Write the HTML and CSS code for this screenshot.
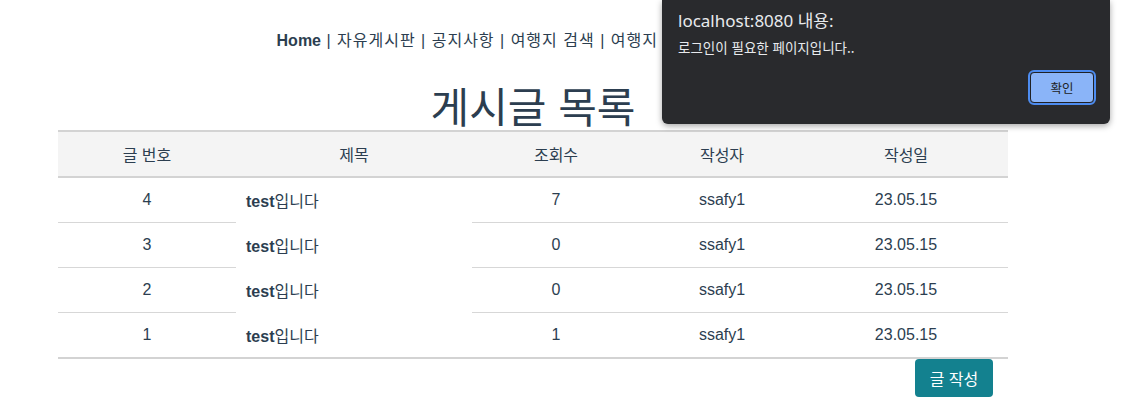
FILE: index.html
```html
<!DOCTYPE html>
<html lang="ko">
<head>
<meta charset="utf-8">
<title>게시글 목록</title>
<link rel="stylesheet" href="styles.css">
</head>
<body>
<div class="app">
  <nav class="nav">
    <a class="nav-link active" href="#">Home</a> | <a class="nav-link" href="#">자유게시판</a> | <a class="nav-link" href="#">공지사항</a> | <a class="nav-link" href="#">여행지 검색</a> | <a class="nav-link" href="#">여행지 공유</a> | <a class="nav-link" href="#">마이페이지</a>
  </nav>
  <h1 class="page-title">게시글 목록</h1>
  <table class="board">
    <colgroup>
      <col class="c-no"><col class="c-title"><col class="c-hit"><col class="c-user"><col class="c-date">
    </colgroup>
    <thead>
      <tr><th>글 번호</th><th>제목</th><th>조회수</th><th>작성자</th><th>작성일</th></tr>
    </thead>
    <tbody>
      <tr><td>4</td><td class="title-cell"><b>test</b>입니다</td><td>7</td><td>ssafy1</td><td>23.05.15</td></tr>
      <tr><td>3</td><td class="title-cell"><b>test</b>입니다</td><td>0</td><td>ssafy1</td><td>23.05.15</td></tr>
      <tr><td>2</td><td class="title-cell"><b>test</b>입니다</td><td>0</td><td>ssafy1</td><td>23.05.15</td></tr>
      <tr><td>1</td><td class="title-cell"><b>test</b>입니다</td><td>1</td><td>ssafy1</td><td>23.05.15</td></tr>
    </tbody>
  </table>
  <div class="actions">
    <button class="btn-write" type="button">글 작성</button>
  </div>
</div>

<div class="dialog">
  <div class="dialog-title">localhost:8080 내용:</div>
  <div class="dialog-msg">로그인이 필요한 페이지입니다..</div>
  <div class="dialog-actions">
    <button class="dialog-btn" type="button">확인</button>
  </div>
</div>
</body>
</html>
```
FILE: styles.css
```css
* { box-sizing: border-box; }
html, body { margin: 0; padding: 0; background: #fff; }
body {
  font-family: "Liberation Sans", Arial, "Noto Sans CJK KR", sans-serif;
  color: #2c3e50;
  width: 1132px;
  height: 407px;
  overflow: hidden;
}
.app {
  width: 1066px;
  text-align: center;
}
.nav {
  padding-top: 31px;
  height: 52px;
  font-size: 16px;
  line-height: 20px;
  letter-spacing: 1px;
  white-space: nowrap;
}
.nav-link {
  color: #2c3e50;
  text-decoration: none;
}
.nav-link.active { font-weight: bold; letter-spacing: 0; }
.page-title {
  margin: 0;
  height: 78px;
  font-size: 42px;
  font-weight: normal;
  line-height: 50px;
  padding-top: 28px;
  font-family: "Noto Sans CJK KR", sans-serif;
}
.board {
  width: 950px;
  margin: 0 58px;
  border-collapse: separate;
  border-spacing: 0;
  table-layout: fixed;
  font-size: 16px;
}
.c-no { width: 178px; }
.c-title { width: 236px; }
.c-hit { width: 168px; }
.c-user { width: 164px; }
.c-date { width: 204px; }
.board th {
  background: #f4f4f4;
  border-top: 2px solid #d3d3d3;
  border-bottom: 2px solid #d3d3d3;
  height: 48px;
  font-weight: normal;
  padding: 0;
  text-align: center;
}
.board td {
  height: 45px;
  border-bottom: 1px solid #d7d7d7;
  padding: 0;
  text-align: center;
}
.board td.title-cell {
  text-align: left;
  padding-left: 10px;
  border-bottom-color: transparent;
}
.board tbody tr:last-child td {
  height: 46px;
  border-bottom: 2px solid #d3d3d3;
}
.board b { font-weight: bold; }
.actions {
  width: 1008px;
  text-align: right;
  padding-right: 15px;
  padding-top: 0;
}
.btn-write {
  width: 78px;
  height: 38px;
  background: #13818f;
  color: #fff;
  border: none;
  border-radius: 4px;
  font-size: 16px;
  font-family: "Noto Sans CJK KR", sans-serif;
  padding: 0;
  vertical-align: top;
}
.dialog {
  position: absolute;
  left: 662px;
  top: 0;
  width: 448px;
  height: 124px;
  background: #292a2d;
  border-radius: 0 0 6px 6px;
  box-shadow: 0 2px 6px rgba(0,0,0,0.35);
  color: #e8eaed;
  padding: 10px 16px 0 16px;
  text-align: left;
}
.dialog-title {
  font-family: "Noto Sans", "Noto Sans CJK KR", sans-serif;
  font-size: 17px;
  line-height: 22px;
}
.dialog-msg {
  margin-top: 6px;
  font-family: "Noto Sans CJK KR", sans-serif;
  font-size: 13.5px;
  line-height: 18px;
}
.dialog-actions {
  display: flex;
  justify-content: flex-end;
  margin-top: 16px;
}
.dialog-btn {
  width: 64px;
  height: 31px;
  background: #8ab4f8;
  border: 1px solid #202124;
  outline: 2px solid #4d8cf0;
  outline-offset: 0;
  border-radius: 4px;
  color: #202124;
  font-family: "Noto Sans CJK KR", sans-serif;
  font-size: 12.5px;
  padding: 0;
}
```
